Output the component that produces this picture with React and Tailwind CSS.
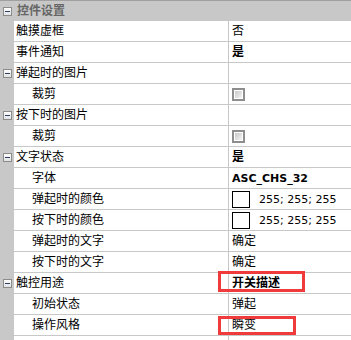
import React from "react";

const rows = [
  { name: "触摸虚框", value: "否" },
  { name: "事件通知", value: "是", bold: true },
  { name: "弹起时的图片", group: true },
  { name: "裁剪", child: true, type: "checkbox" },
  { name: "按下时的图片", group: true },
  { name: "裁剪", child: true, type: "checkbox" },
  { name: "文字状态", group: true, value: "是", bold: true },
  { name: "字体", child: true, value: "ASC_CHS_32", bold: true, latin: true },
  { name: "弹起时的颜色", child: true, type: "color", value: "255; 255; 255" },
  { name: "按下时的颜色", child: true, type: "color", value: "255; 255; 255" },
  { name: "弹起时的文字", child: true, value: "确定" },
  { name: "按下时的文字", child: true, value: "确定" },
  { name: "触控用途", group: true, value: "开关描述", bold: true },
  { name: "初始状态", child: true, value: "弹起" },
  { name: "操作风格", child: true, value: "瞬变" },
];

const latinFont = { fontFamily: '"DejaVu Sans", "Noto Sans CJK SC", sans-serif' };

function Minus() {
  return (
    <div className="ml-[3px] flex h-[9px] w-[9px] items-center justify-center border border-[#8c8c8c] bg-gradient-to-b from-white to-[#e2e2e2]">
      <div className="h-px w-[5px] bg-[#2c3e66]" />
    </div>
  );
}

function Checkbox() {
  return (
    <div className="flex h-[13px] w-[13px] items-center justify-center border-2 border-[#8e8e8e] bg-white">
      <div className="h-[7px] w-[7px] bg-gradient-to-br from-[#c8c8c8] to-[#f4f4f4]" />
    </div>
  );
}

function Row({ row }) {
  return (
    <div className="flex h-[21px]">
      <div className="flex w-[14px] items-center bg-[#c8c8c8]">
        {row.group && <Minus />}
      </div>
      <div
        className={`flex w-[214px] items-center border-b border-[#c8c8c8] text-black ${
          row.child ? "pl-[18px]" : "pl-[2px]"
        }`}
      >
        {row.name}
      </div>
      <div className="flex flex-1 items-center border-b border-l border-[#c8c8c8] pl-[3px]">
        {row.type === "checkbox" && <Checkbox />}
        {row.type === "color" && (
          <>
            <div className="h-[17px] w-[18px] border border-black bg-white" />
            <span className="ml-[9px] text-[11px]" style={latinFont}>
              {row.value}
            </span>
          </>
        )}
        {!row.type && row.value && (
          <span
            className={`${row.bold ? "font-bold" : ""} ${row.latin ? "text-[11px]" : ""}`}
            style={row.latin ? latinFont : undefined}
          >
            {row.value}
          </span>
        )}
      </div>
    </div>
  );
}

export default function App() {
  return (
    <div
      className="relative h-[340px] w-[351px] overflow-hidden bg-white text-[12px] leading-none"
      style={{ fontFamily: '"Liberation Sans", "Noto Sans CJK SC", sans-serif' }}
    >
      <div className="h-[21px] border-t border-[#a0a0a0] bg-[#c8c8c8]">
        <div className="flex h-[20px] items-center">
          <div className="w-[14px]">
            <Minus />
          </div>
          <span className="pl-[3px] font-bold text-[#666666]">控件设置</span>
        </div>
      </div>
      {rows.map((row, i) => (
        <Row key={i} row={row} />
      ))}
      <Row row={{ name: "" }} />

      <div className="absolute left-[218px] top-[271px] h-[21px] w-[87px] border-[3px] border-[#ef3b3b]" />
      <div className="absolute left-[218px] top-[316px] h-[19px] w-[78px] border-[3px] border-[#ef3b3b]" />
    </div>
  );
}
